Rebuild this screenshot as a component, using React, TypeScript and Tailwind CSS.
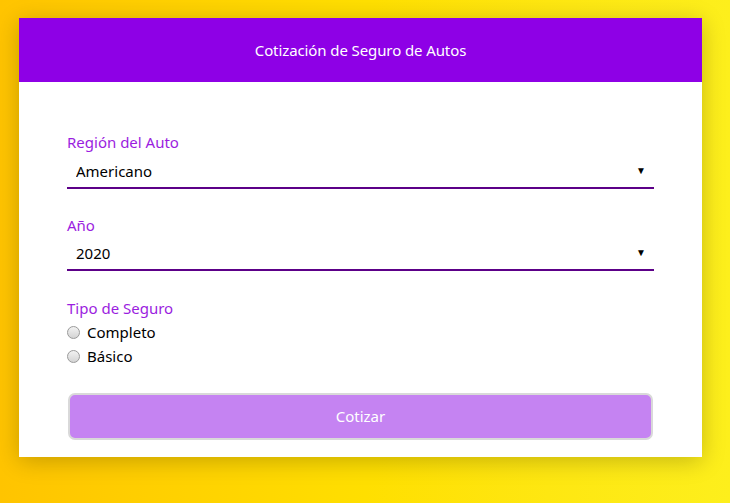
import { useState } from 'react';

const App = () => {
    const [marca, setMarca] = useState('americano');
    const [year, setYear] = useState('2020');
    const [plan, setPlan] = useState('');

    const years = ['2020', '2019', '2018', '2017', '2016', '2015', '2014', '2013', '2012'];

    return (
        <div className="min-h-screen w-full bg-linear-to-r from-[#ffc400] via-[#ffdf00] to-[#fdef1c] pt-[18px] pl-[19px] pb-[47px] font-['Noto_Sans',sans-serif]">
            <div className="w-[683px] bg-white shadow-[0_4px_22px_rgba(0,0,0,0.22)]">
                {/* Header */}
                <header className="h-[64px] bg-[#8e00e6] flex items-center justify-center">
                    <h1 className="text-white text-[15px] tracking-[-0.1px]">Cotización de Seguro de Autos</h1>
                </header>

                <form className="px-[48px] pt-[50px] pb-[17px]" onSubmit={(e) => e.preventDefault()}>
                    {/* Región */}
                    <div>
                        <label className="block text-[#9b1de0] text-[15px] leading-[20px]">Región del Auto</label>
                        <div className="relative mt-[4px] border-b-2 border-[#5c0088]">
                            <select
                                value={marca}
                                onChange={(e) => setMarca(e.target.value)}
                                className="w-full appearance-none bg-transparent pl-[9px] h-[31px] text-[15px] text-black outline-none"
                            >
                                <option value="americano">Americano</option>
                                <option value="europeo">Europeo</option>
                                <option value="asiatico">Asiático</option>
                            </select>
                            <span className="pointer-events-none absolute right-[8px] top-[7px] text-[10px] text-black">▼</span>
                        </div>
                    </div>

                    {/* Año */}
                    <div className="mt-[26px]">
                        <label className="block text-[#9b1de0] text-[15px] leading-[20px]">Año</label>
                        <div className="relative mt-[3px] border-b-2 border-[#5c0088]">
                            <select
                                value={year}
                                onChange={(e) => setYear(e.target.value)}
                                className="w-full appearance-none bg-transparent pl-[9px] h-[31px] text-[15px] text-black outline-none"
                            >
                                {years.map((y) => (
                                    <option key={y} value={y}>{y}</option>
                                ))}
                            </select>
                            <span className="pointer-events-none absolute right-[8px] top-[7px] text-[10px] text-black">▼</span>
                        </div>
                    </div>

                    {/* Tipo de Seguro */}
                    <div className="mt-[27px]">
                        <label className="block text-[#9b1de0] text-[15px] leading-[20px]">Tipo de Seguro</label>
                        <div className="mt-[2px] flex flex-col">
                            {[
                                { value: 'completo', label: 'Completo' },
                                { value: 'basico', label: 'Básico' },
                            ].map((opt) => (
                                <label key={opt.value} className="flex items-center h-[24px] text-[15px] text-black">
                                    <input
                                        type="radio"
                                        name="plan"
                                        value={opt.value}
                                        checked={plan === opt.value}
                                        onChange={(e) => setPlan(e.target.value)}
                                        className="appearance-none w-[13px] h-[13px] rounded-full border border-[#9a9a9a] bg-linear-to-b from-[#f2f2f2] to-[#d4d4d4] mr-[7px] checked:bg-[#8e00e6]"
                                    />
                                    {opt.label}
                                </label>
                            ))}
                        </div>
                    </div>

                    {/* Button */}
                    <button
                        type="submit"
                        className="mt-[25px] ml-[1px] w-[585px] h-[47px] rounded-[7px] bg-[#c583f2] border-2 border-[#d9d9d9] text-white text-[15px]"
                    >
                        Cotizar
                    </button>
                </form>
            </div>
        </div>
    );
};

export default App;
